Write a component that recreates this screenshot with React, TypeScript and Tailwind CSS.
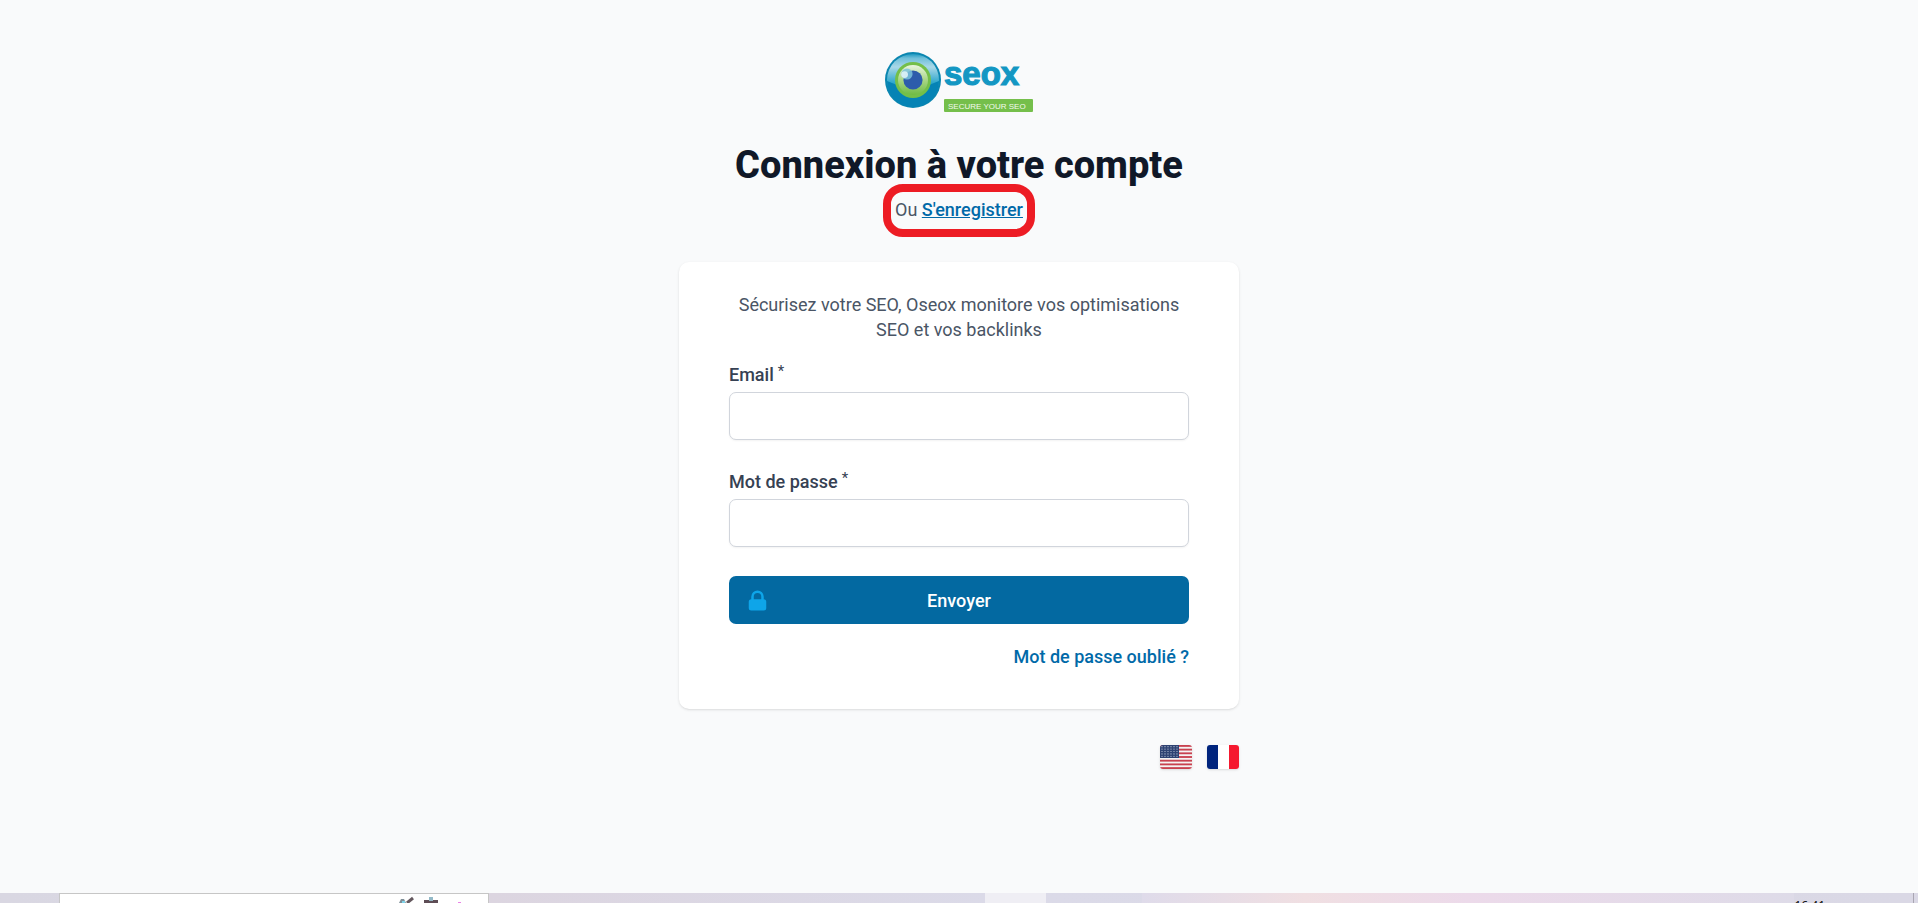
import React from "react";

const Logo = () => (
  <svg viewBox="0 0 150 64" className="h-16 w-[150px]" role="img" aria-label="Oseox">
    <defs>
      <linearGradient id="gloss" x1="0" y1="0" x2="0" y2="1">
        <stop offset="0" stopColor="#1f9ac2" />
        <stop offset="0.08" stopColor="#6fbfd9" />
        <stop offset="0.25" stopColor="#a9d8e8" />
        <stop offset="0.6" stopColor="#1a9fc8" />
        <stop offset="1" stopColor="#1a9fc8" />
      </linearGradient>
      <linearGradient id="iris" x1="0" y1="0" x2="0" y2="1">
        <stop offset="0" stopColor="#eaf5df" />
        <stop offset="0.5" stopColor="#a9d687" />
        <stop offset="1" stopColor="#6fbb44" />
      </linearGradient>
    </defs>
    <circle cx="29" cy="30" r="28" fill="#0b86b0" />
    <circle cx="29" cy="30" r="26" fill="url(#gloss)" />
    <path d="M3 31 Q29 43 55 31 A26 26 0 0 1 3 31Z" fill="#0583b5" />
    <circle cx="29" cy="30" r="18" fill="#74bf49" />
    <circle cx="29" cy="30" r="15" fill="url(#iris)" />
    <circle cx="29" cy="30" r="9.6" fill="#2d5cab" />
    <circle cx="23" cy="24" r="5.6" fill="#7cc3dc" opacity="0.85" />
    <circle cx="20.6" cy="24.6" r="3.4" fill="#dff2f7" opacity="0.9" />
    <text x="60" y="35" fill="#1397c3" stroke="#1397c3" strokeWidth="1.2" className="font-['Liberation_Sans',sans-serif] text-[33px] font-bold">
      seox
    </text>
    <rect x="60" y="49" width="89" height="13" rx="1" fill="#75bf4b" />
    <text x="64" y="59" fill="#f2faee" className="font-['Liberation_Sans',sans-serif] text-[8px]">
      SECURE YOUR SEO
    </text>
  </svg>
);

const FlagUS = () => (
  <svg viewBox="0 0 32 24" className="h-6 w-8 rounded-[3px] shadow">
    <rect width="32" height="24" fill="#f5f3f3" />
    {[0, 1, 2, 3, 4, 5, 6].map((i) => (
      <rect key={i} y={(i * 48) / 13} width="32" height={24 / 13} fill="#c8414f" />
    ))}
    <rect width="19" height="13" fill="#2f4373" />
    {[0, 1, 2, 3, 4].map((row) =>
      [0, 1, 2, 3, 4, 5].map((col) => (
        <circle key={`${row}-${col}`} cx={2 + col * 3} cy={1.7 + row * 2.4} r="0.6" fill="#c3cbdc" />
      ))
    )}
  </svg>
);

const FlagFR = () => (
  <svg viewBox="0 0 32 24" className="h-6 w-8 rounded-[3px] shadow">
    <rect width="32" height="24" fill="#ffffff" />
    <rect width="11" height="24" fill="#00247d" />
    <rect x="22" width="10" height="24" fill="#f5192f" />
  </svg>
);

const Field = ({ id, label, type }: { id: string; label: string; type: string }) => (
  <div>
    <label htmlFor={id} className="flex gap-1 text-[18px] leading-[25px] font-medium text-gray-700">
      {label}
      <span className="text-[15px] leading-[18px] font-normal">*</span>
    </label>
    <input
      id={id}
      type={type}
      required
      className="mt-[5px] block h-12 w-full rounded-[7px] border border-gray-300 bg-white px-4 shadow-xs outline-none focus:border-sky-600"
    />
  </div>
);

const Taskbar = () => (
  <footer className="flex h-[10px] shrink-0 overflow-hidden bg-linear-to-r from-[#d9d7e2] via-[#dcdbe8] to-[#dad8e5]">
    <div className="w-[59px]" />
    <div className="flex w-[430px] justify-end border border-b-0 border-[#c6c6c6] bg-white pr-6">
      <svg viewBox="0 0 66 9" className="h-[9px] w-[66px]">
        <path d="M1 9 L3 5 L6 5 L8 9Z" fill="#7f8f98" />
        <path d="M4 7h3v2H4z" fill="#7fd4ea" />
        <path d="M9 9 L15 4" stroke="#64585e" strokeWidth="3" fill="none" />
        <path d="M26 6h14v3H26z" fill="#5e4d55" />
        <path d="M31 3h4v4h-4z" fill="#93b9c7" />
        <path d="M60 8h3v1h-3z" fill="#ea82e6" />
      </svg>
    </div>
    <div className="flex-1 bg-linear-to-r from-[#dcd5e0] to-[#dbdae8]" />
    <div className="w-[61px] bg-[#efeef4]" />
    <div className="flex w-[872px] justify-end bg-linear-to-r from-[#dbdae8] to-[#dad8e5]">
      <div className="w-24" />
      <div className="flex-1 bg-linear-to-r from-[#dfdbea] via-[#f0dfe2] to-[#ecdaea]" />
      <div className="flex-1 bg-linear-to-r from-[#ecdaea] to-[#dedbe8]" />
      <span className="mt-[5px] mr-[88px] font-['Open_Sans',sans-serif] text-[12px] leading-4 text-black">
        16:41
      </span>
      <div className="mr-1 w-px bg-[#a9a6b2]" />
    </div>
  </footer>
);

const App = () => {
  return (
    <div className="flex min-h-screen flex-col bg-gray-50 font-[Roboto,sans-serif]">
      <main className="mx-auto flex w-full max-w-[560px] flex-1 flex-col pt-[50px]">
        <header className="flex flex-col items-center">
          <Logo />
          <h1 className="mt-[29px] text-[38px] leading-[45px] font-extrabold text-gray-900">
            Connexion à votre compte
          </h1>
          <div className="-mt-1 rounded-[20px] border-8 border-[#ed1c24] px-1 pt-[5px] pb-[7px]">
            <p className="text-[18px] leading-[25px] text-gray-600">
              Ou{" "}
              <a href="#register" className="font-medium text-sky-700 underline">
                S'enregistrer
              </a>
            </p>
          </div>
        </header>

        <section className="mt-[25px] rounded-[10px] bg-white px-[50px] pt-[30px] pb-10 shadow">
          <p className="text-center text-[18px] leading-[25px] text-gray-600">
            Sécurisez votre SEO, Oseox monitore vos optimisations SEO et vos backlinks
          </p>
          <form className="mt-5 flex flex-col gap-[29px]">
            <Field id="email" label="Email" type="email" />
            <Field id="password" label="Mot de passe" type="password" />
            <button
              type="submit"
              className="relative h-12 rounded-[7px] bg-[#0369a1] text-[18px] font-medium text-white"
            >
              <span className="absolute inset-y-0 left-4 flex items-center">
                <svg viewBox="0 0 20 20" className="size-[25px] fill-[#0ea5e9]" aria-hidden="true">
                  <path
                    fillRule="evenodd"
                    clipRule="evenodd"
                    d="M5 9V7a5 5 0 0110 0v2a2 2 0 012 2v5a2 2 0 01-2 2H5a2 2 0 01-2-2v-5a2 2 0 012-2zm8-2v2H7V7a3 3 0 016 0z"
                  />
                </svg>
              </span>
              Envoyer
            </button>
          </form>
          <div className="mt-5 text-right text-[18px] leading-[25px]">
            <a href="#forgot" className="font-medium text-sky-700">
              Mot de passe oublié ?
            </a>
          </div>
        </section>

        <nav className="mt-9 flex justify-end gap-[15px]">
          <a href="#en" aria-label="English">
            <FlagUS />
          </a>
          <a href="#fr" aria-label="Français">
            <FlagFR />
          </a>
        </nav>
      </main>
      <Taskbar />
    </div>
  );
};

export default App;
